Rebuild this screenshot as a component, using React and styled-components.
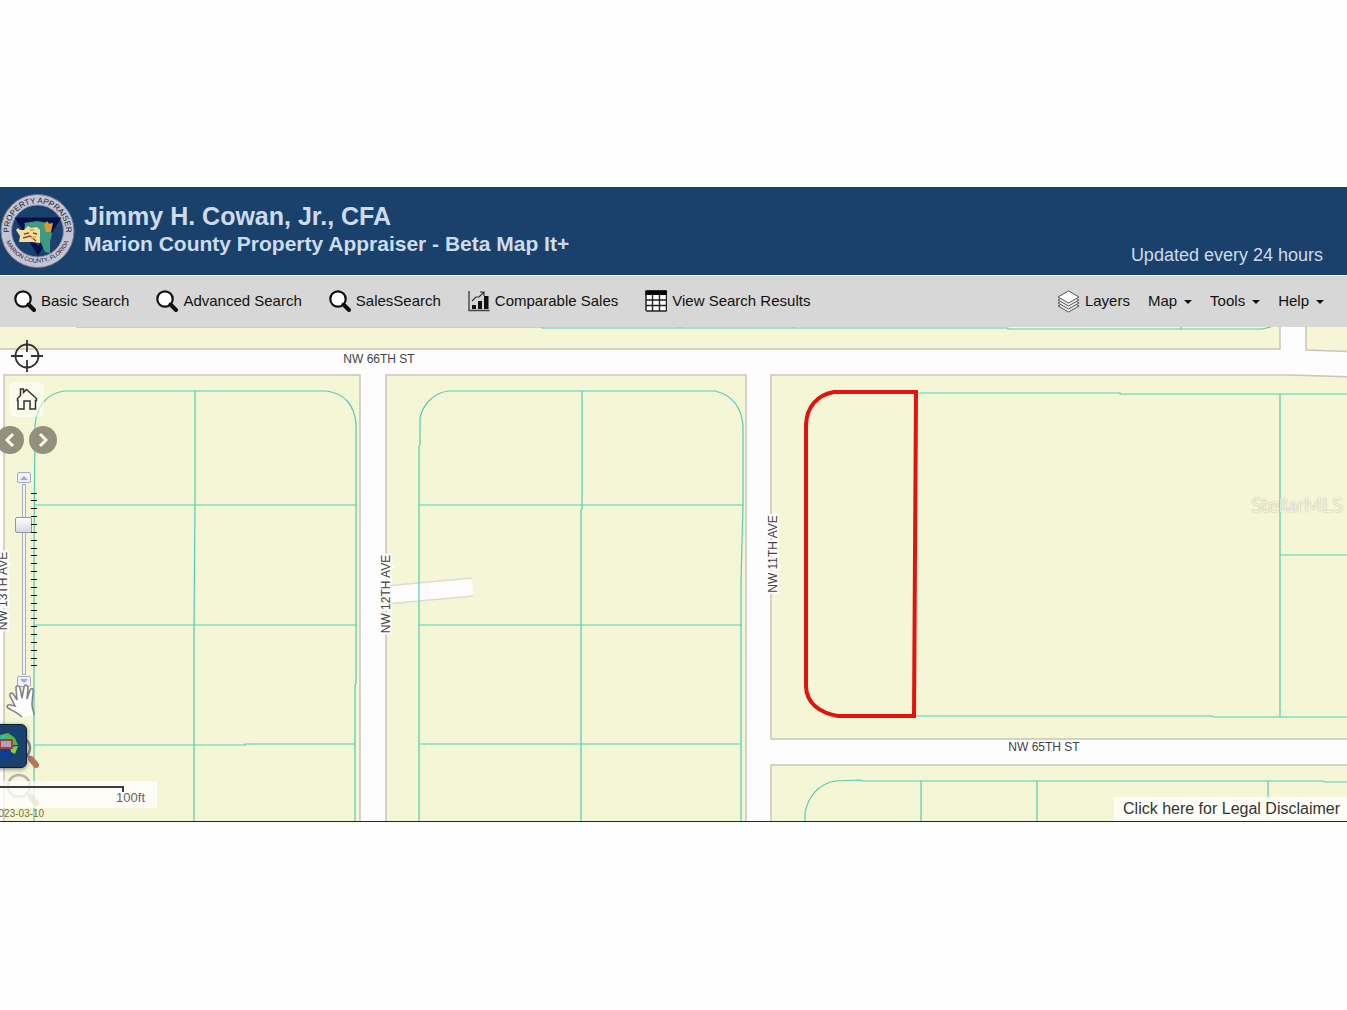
import { useState } from 'react';
import styled, { createGlobalStyle } from 'styled-components';

const searchMenu = [
    { label: 'Basic Search', icon: 'search' },
    { label: 'Advanced Search', icon: 'search' },
    { label: 'SalesSearch', icon: 'search' },
    { label: 'Comparable Sales', icon: 'chart' },
    { label: 'View Search Results', icon: 'table' },
];

const mapMenu = ['Map', 'Tools', 'Help'];

const blocks = [
    'M-5 320H1280V349H-5Z',
    'M1306 320H1360V352L1306 350Z',
    'M4 375H360V830H4Z',
    'M386 375H746V830H386Z',
    'M771 375H1290L1360 377V739H771Z',
    'M771 765H1360V830H771Z',
];

const parcels = [
    'M76 327H542V328H1008V329H1262L1271 327M680 327V328M794 327V328M1181 327V329',
    'M34 830V550L35 425C37 405 46 394 64 391H326C344 393 355 405 356 425V683L355 685V830',
    'M195 391V505L194 626V830M34 505H356M34 625H356M34 745H245V744H355',
    'M419 830V446L420 444V418C423 404 434 393 448 391H715C732 395 741 406 743 425V505L741 580V830',
    'M582 391V509L581 511V830M419 505H743M419 625H742M419 744H741',
    'M916 393H1120V394H1360M915 716H1212L1214 717H1360M1280 394V717M1280 555H1360',
    'M805 830V813C808 797 818 784 835 781L860 780L862 781H1323L1325 782H1360M921 781V830M1037 781V830M1268 781V830',
];

const SearchIcon = () => (
    <svg width="22" height="22" viewBox="0 0 22 22" aria-hidden="true">
        <circle cx="9" cy="9" r="7.7" fill="#fff" stroke="#111" strokeWidth="2.2" />
        <path d="M14.5 14.5L20 20" stroke="#111" strokeWidth="4" strokeLinecap="round" />
    </svg>
);

const ChartIcon = () => (
    <svg width="22" height="22" viewBox="0 0 22 22" fill="none" aria-hidden="true">
        <path d="M1 1V20.5H21.5" stroke="#444" strokeWidth="1.4" />
        <path d="M4 15h4v4H4zM10 11h4v8h-4zM16 6h4.5v13H16z" fill="#111" />
        <path d="M4 11L8 7H11L16 2M12 2H16V6" stroke="#333" strokeWidth="1.2" />
    </svg>
);

const TableIcon = () => (
    <svg width="22" height="22" viewBox="0 0 22 22" aria-hidden="true">
        <rect x="1" y="1" width="20.5" height="20" rx="1" fill="#fff" stroke="#222" strokeWidth="1.5" />
        <rect x="0.5" y="0.5" width="21.5" height="4.5" fill="#000" />
        <path d="M1 10H21M1 15.5H21M7.5 4V21M14.5 4V21" stroke="#222" strokeWidth="1.4" />
    </svg>
);

const LayersIcon = () => (
    <svg width="23" height="23" viewBox="0 0 23 23" stroke="#555" strokeLinejoin="round" aria-hidden="true">
        <path d="M1 16L11.5 22L22 16L11.5 10Z" fill="#eee" />
        <path d="M1 13L11.5 19L22 13L11.5 7Z" fill="#eee" />
        <path d="M1 10L11.5 16L22 10L11.5 4Z" fill="#eee" />
        <path d="M1 7L11.5 13L22 7L11.5 1Z" fill="#fff" />
    </svg>
);

const icons = { search: SearchIcon, chart: ChartIcon, table: TableIcon };

const Seal = () => (
    <svg width="76" height="78" viewBox="0 0 76 78" role="img" aria-label="Property Appraiser seal">
        <defs>
            <path id="sealTop" d="M9.5 45A28.5 28.5 0 1 1 65.5 45" />
            <path id="sealBottom" d="M4.5 43A33.5 33.5 0 0 0 70.5 43" />
        </defs>
        <circle cx="37.5" cy="39" r="36.5" fill="#c3c4d6" stroke="#77798a" />
        <circle cx="37.5" cy="39" r="26" fill="#1a416b" stroke="#8d90a5" />
        <path d="M19 28H57L38 59Z" fill="none" stroke="#07104a" strokeWidth="5" />
        <path d="M25 31L37 29L48 31L52 42L50 50L50 61L45 60L41 51L33 45L24 42Z" fill="#3c9a83" />
        <path d="M16 38L18 36L20 38L24 38L28 34L31 36L37 35L40 38L40 51L31 50L19 50L20 44Z" fill="#f2dfa0" />
        <path d="M44 33L47 29L49 32L53 31L51 40L46 40Z" fill="#e09a28" />
        <path d="M24 42L29 41M33 41L37 42M23 46L30 44L36 49" fill="none" stroke="#8b4a34" strokeWidth="1.5" />
        <path d="M30 38L34 38M31 46L36 45" fill="none" stroke="#e6b23a" strokeWidth="2" />
        <SealText fontSize="8">
            <textPath href="#sealTop" startOffset="50%" textAnchor="middle">PROPERTY APPRAISER</textPath>
        </SealText>
        <SealText fontSize="6">
            <textPath href="#sealBottom" startOffset="50%" textAnchor="middle">MARION COUNTY, FLORIDA</textPath>
        </SealText>
    </svg>
);

const ParcelMap = () => (
    <MapSvg viewBox="0 327 1347 494" preserveAspectRatio="xMinYMin slice" role="img" aria-label="Parcel map">
        <rect x="-5" y="320" width="1400" height="520" fill="#fdfdfd" />
        {blocks.map((d) => <path key={d} d={d} fill="#f5f6d5" stroke="#c9c6b8" strokeWidth="1.5" />)}
        <path d="M386 586L472 578L473 596L386 604Z" fill="#fdfdfd" />
        <path d="M386 586L472 578M386 604L473 596" stroke="#dedbd0" strokeWidth="1.5" />
        {parcels.map((d) => <path key={d} d={d} fill="none" stroke="#51cdb6" strokeWidth="1.2" />)}
        <path
            d="M834 392H916L914 716H838C820 713 806 703 806 686V424C807 407 817 395 834 392Z"
            fill="none"
            stroke="#e3120f"
            strokeWidth="4"
        />
        <StreetName x="379" y="363">NW 66TH ST</StreetName>
        <StreetName x="1044" y="751">NW 65TH ST</StreetName>
        <StreetName transform="translate(7 591) rotate(-90)">NW 13TH AVE</StreetName>
        <StreetName transform="translate(390 594) rotate(-90)">NW 12TH AVE</StreetName>
        <StreetName transform="translate(777 554) rotate(-90)">NW 11TH AVE</StreetName>
    </MapSvg>
);

const HandIcon = () => (
    <svg width="30" height="34" viewBox="0 0 30 34" aria-hidden="true">
        <path
            d="M16 33C12 29 7 27 2 24C0 22 2 20 5 21L9 22L4 12C3 9 6 8 8 11L11 16L10 4C10 1 13 1 14 4L16 14L18 3C19 0 22 1 22 4L21 15L24 6C26 3 28 5 27 9L26 20C26 25 28 27 28 31"
            fill="#fdfdfd"
            stroke="#858585"
            strokeWidth="1.6"
        />
    </svg>
);

const ZoomIcon = ({ faded }) => (
    <svg width="34" height="36" viewBox="0 0 34 36" opacity={faded ? 0.6 : 1} aria-hidden="true">
        <circle cx="13" cy="14" r="11" fill="#f7f7f2" stroke="#888" strokeWidth="2.5" />
        <path d="M22 22L24 24" stroke="#888" strokeWidth="3" />
        <path d="M25 25L30 31" stroke="#b57758" strokeWidth="6" strokeLinecap="round" />
    </svg>
);

const App = () => {
    const [zoom, setZoom] = useState(19);

    return (
        <Page>
            <GlobalStyle />
            <Header>
                <Seal />
                <Titles>
                    <Owner>Jimmy H. Cowan, Jr., CFA</Owner>
                    <SiteName>Marion County Property Appraiser - Beta Map It+</SiteName>
                </Titles>
                <Updated>Updated every 24 hours</Updated>
            </Header>

            <Toolbar>
                <Menu gap="27px">
                    {searchMenu.map(({ label, icon }) => {
                        const Icon = icons[icon];
                        return (
                            <MenuButton key={label} type="button"><Icon />{label}</MenuButton>
                        );
                    })}
                </Menu>
                <Menu gap="18px">
                    <MenuButton type="button"><LayersIcon />Layers</MenuButton>
                    {mapMenu.map((label) => (
                        <MenuButton key={label} type="button" aria-haspopup="menu">{label}<Caret /></MenuButton>
                    ))}
                </Menu>
            </Toolbar>

            <MapArea>
                <ParcelMap />

                <NavTools>
                    <ToolButton type="button" aria-label="Find my location">
                        <svg width="34" height="34" viewBox="0 0 34 34" fill="none" stroke="#333" strokeWidth="1.8">
                            <circle cx="17" cy="17" r="11.5" />
                            <path d="M17 1V13M17 21V33M1 17H13M21 17H33" />
                        </svg>
                    </ToolButton>
                    <HomeButton type="button" aria-label="Home">
                        <svg width="22" height="24" viewBox="0 0 22 24" fill="none" stroke="#333" strokeWidth="1.5">
                            <path d="M2 22V13.500H1.500V11.500L4.500 8.500V2H7.500V5.500L10.500 2.500L20.500 11.500V13.500H19.500V22H14V14H8V22Z" />
                        </svg>
                    </HomeButton>
                    <Pager>
                        <RoundButton type="button" aria-label="Previous extent">
                            <svg width="28" height="28" viewBox="0 0 28 28"><path d="M17 8L11 14L17 20" /></svg>
                        </RoundButton>
                        <RoundButton type="button" aria-label="Next extent">
                            <svg width="28" height="28" viewBox="0 0 28 28"><path d="M11 8L17 14L11 20" /></svg>
                        </RoundButton>
                    </Pager>
                </NavTools>

                <ZoomTools>
                    <StepButton type="button" aria-label="Zoom in">
                        <svg width="12" height="9" viewBox="0 0 12 9"><path d="M2 7L6 3L10 7Z" /></svg>
                    </StepButton>
                    <ZoomSlider
                        type="range"
                        min="0"
                        max="100"
                        aria-label="Zoom level"
                        value={zoom}
                        onChange={(e) => setZoom(Number(e.target.value))}
                    />
                    <StepButton type="button" aria-label="Zoom out">
                        <svg width="12" height="9" viewBox="0 0 12 9"><path d="M2 2L6 6L10 2Z" /></svg>
                    </StepButton>
                </ZoomTools>
                <Ticks>
                    {Array.from({ length: 23 }, (_, i) => <Tick key={i} />)}
                </Ticks>

                <MouseTools>
                    <ToolButton type="button" aria-label="Pan"><HandIcon /></ToolButton>
                    <ToolButton type="button" aria-label="Zoom in to area"><ZoomIcon /></ToolButton>
                    <ToolButton type="button" aria-label="Zoom out to area"><ZoomIcon faded /></ToolButton>
                </MouseTools>
                <BasemapButton type="button" aria-label="Basemaps">
                    <svg width="30" height="30" viewBox="0 0 30 30">
                        <circle cx="15" cy="15" r="13" fill="#0b3f91" />
                        <path d="M10 4L18 2L25 7L28 14L23 14L17 10L10 13L4 10Z" fill="#50b841" />
                        <path d="M20 16L28 15L25 23L21 21Z" fill="#86cf39" />
                        <path d="M7 8L13 4L18 5L13 8Z" fill="#35b8bd" />
                        <rect x="10" y="9" width="12" height="8" fill="#a9a2be" stroke="#a3423c" strokeWidth="2" />
                    </svg>
                </BasemapButton>

                <ScaleBar><ScaleLine />100ft</ScaleBar>
                <MapDate>2023-03-10</MapDate>
                <Watermark>StellarMLS</Watermark>
                <Disclaimer href="#disclaimer">Click here for Legal Disclaimer</Disclaimer>
            </MapArea>
        </Page>
    );
};

export default App;

const GlobalStyle = createGlobalStyle`
    * {
        box-sizing: border-box;
    }

    body {
        margin: 0;
        background-color: #fefefe;
        font-family: "Liberation Sans", Arial, sans-serif;
    }

    button {
        padding: 0;
        border: none;
        background: none;
        color: inherit;
        font: inherit;
        cursor: pointer;
    }

    svg {
        display: block;
        flex-shrink: 0;
    }
`;

const Page = styled.div`
    display: flex;
    flex-direction: column;
    justify-content: center;
    min-height: 100vh;
    padding-bottom: 2px;
    overflow: hidden;
`;

const Header = styled.header`
    display: flex;
    align-items: center;
    gap: 8px;
    height: 88px;
    padding-right: 24px;
    background-color: #1a416b;
    color: #cddcec;
`;

const SealText = styled.text`
    font-family: "Liberation Sans", Arial, sans-serif;
    fill: #15182b;
`;

const Titles = styled.div`
    flex: 1;
    padding-bottom: 4px;
`;

const Owner = styled.h1`
    margin: 0;
    font-size: 25px;
    line-height: 30px;
`;

const SiteName = styled.h2`
    margin: 0;
    font-size: 21px;
    line-height: 26px;
`;

const Updated = styled.span`
    align-self: flex-end;
    padding-bottom: 8px;
    font-size: 18px;
    line-height: 24px;
`;

const Toolbar = styled.nav`
    display: flex;
    justify-content: space-between;
    height: 52px;
    padding: 0 23px 0 14px;
    border-top: 1px solid #f4f6f8;
    background-color: #d7d7d7;
`;

const Menu = styled.div`
    display: flex;
    align-items: center;
    gap: ${(props) => props.gap};
`;

const MenuButton = styled.button`
    display: flex;
    align-items: center;
    gap: 5px;
    color: #111;
    font-size: 15px;
    line-height: 24px;
    white-space: nowrap;
`;

const Caret = styled.span`
    margin: 2px 0 0 2px;
    border: 4px solid transparent;
    border-top-color: #111;
    border-bottom: none;
`;

const MapArea = styled.main`
    position: relative;
    height: 495px;
    overflow: hidden;
    border-bottom: 1px solid #1b2733;
`;

const MapSvg = styled.svg`
    width: 100%;
    height: 100%;
`;

const StreetName = styled.text`
    font-family: "Liberation Sans", Arial, sans-serif;
    font-size: 12px;
    text-anchor: middle;
    fill: #444;
    stroke: #fdfdfd;
    stroke-width: 4px;
    paint-order: stroke;
`;

const NavTools = styled.div`
    position: absolute;
    top: 12px;
    left: 0;
    display: flex;
    flex-direction: column;
    align-items: center;
    gap: 9px;
    width: 53px;
`;

const ToolButton = styled.button`
    display: block;
`;

const HomeButton = styled.button`
    display: flex;
    align-items: center;
    justify-content: center;
    width: 35px;
    height: 35px;
    border-radius: 6px;
    background-color: rgba(255, 255, 255, 0.5);
`;

const Pager = styled.div`
    display: flex;
    gap: 5px;
`;

const RoundButton = styled.button`
    border-radius: 50%;
    background-color: #93917d;

    path {
        fill: none;
        stroke: #fdfdf2;
        stroke-width: 3;
    }
`;

const ZoomTools = styled.div`
    position: absolute;
    top: 145px;
    left: 16px;
    display: flex;
    flex-direction: column;
    align-items: center;
    gap: 1px;
    width: 16px;
`;

const StepButton = styled.button`
    border: 1px solid #a6adc2;
    border-radius: 2px;
    background-color: #eef0f8;

    path {
        fill: #9aa9d0;
    }
`;

const ZoomSlider = styled.input`
    width: 16px;
    height: 191px;
    margin: 0;
    appearance: none;
    background: none;
    writing-mode: vertical-lr;

    &::-webkit-slider-runnable-track {
        width: 4px;
        border: 1px solid #a6aabb;
        background-color: #f5f6f8;
    }

    &::-webkit-slider-thumb {
        appearance: none;
        width: 17px;
        height: 16px;
        margin-left: -8px;
        border: 1px solid #8f96ab;
        border-radius: 2px;
        background: linear-gradient(#fdfdff, #d6d9e2);
    }
`;

const Ticks = styled.div`
    position: absolute;
    top: 166px;
    left: 31px;
    display: flex;
    flex-direction: column;
    justify-content: space-between;
    height: 174px;
`;

const Tick = styled.span`
    width: 6px;
    height: 1px;
    background-color: #111;
`;

const MouseTools = styled.div`
    position: absolute;
    top: 357px;
    left: 6px;
    display: flex;
    flex-direction: column;
    gap: 16px;

    button + button {
        margin-bottom: -14px;
    }
`;

const BasemapButton = styled.button`
    position: absolute;
    top: 397px;
    left: -17px;
    display: flex;
    align-items: center;
    justify-content: center;
    width: 44px;
    height: 44px;
    border: 1px solid #0c1f33;
    border-radius: 6px;
    background-color: #1a416b;
    box-shadow: 0 1px 4px rgba(0, 0, 0, 0.5);
`;

const ScaleBar = styled.div`
    position: absolute;
    top: 454px;
    left: 0;
    width: 157px;
    height: 27px;
    padding-right: 12px;
    background-color: rgba(255, 255, 255, 0.75);
    color: #666;
    font-size: 13px;
    line-height: 16px;
    text-align: right;
`;

const ScaleLine = styled.div`
    width: 124px;
    height: 6px;
    margin-top: 5px;
    margin-bottom: -2px;
    border: 2px solid #3c3c3c;
    border-bottom: none;
    border-left: none;
`;

const MapDate = styled.span`
    position: absolute;
    bottom: 1px;
    left: -7px;
    color: #77704c;
    font-size: 10px;
    line-height: 12px;
`;

const Watermark = styled.span`
    position: absolute;
    top: 165px;
    right: 4px;
    color: #fbfbf0;
    font-family: Lato, sans-serif;
    font-size: 20px;
    font-weight: 300;
    line-height: 24px;
    text-shadow: 0 0 2px #8f8d7c;
`;

const Disclaimer = styled.a`
    position: absolute;
    right: 0;
    bottom: 0;
    padding: 0 7px 0 9px;
    background-color: rgba(255, 255, 255, 0.85);
    color: #333;
    font-size: 16px;
    line-height: 24px;
    text-decoration: none;
`;
